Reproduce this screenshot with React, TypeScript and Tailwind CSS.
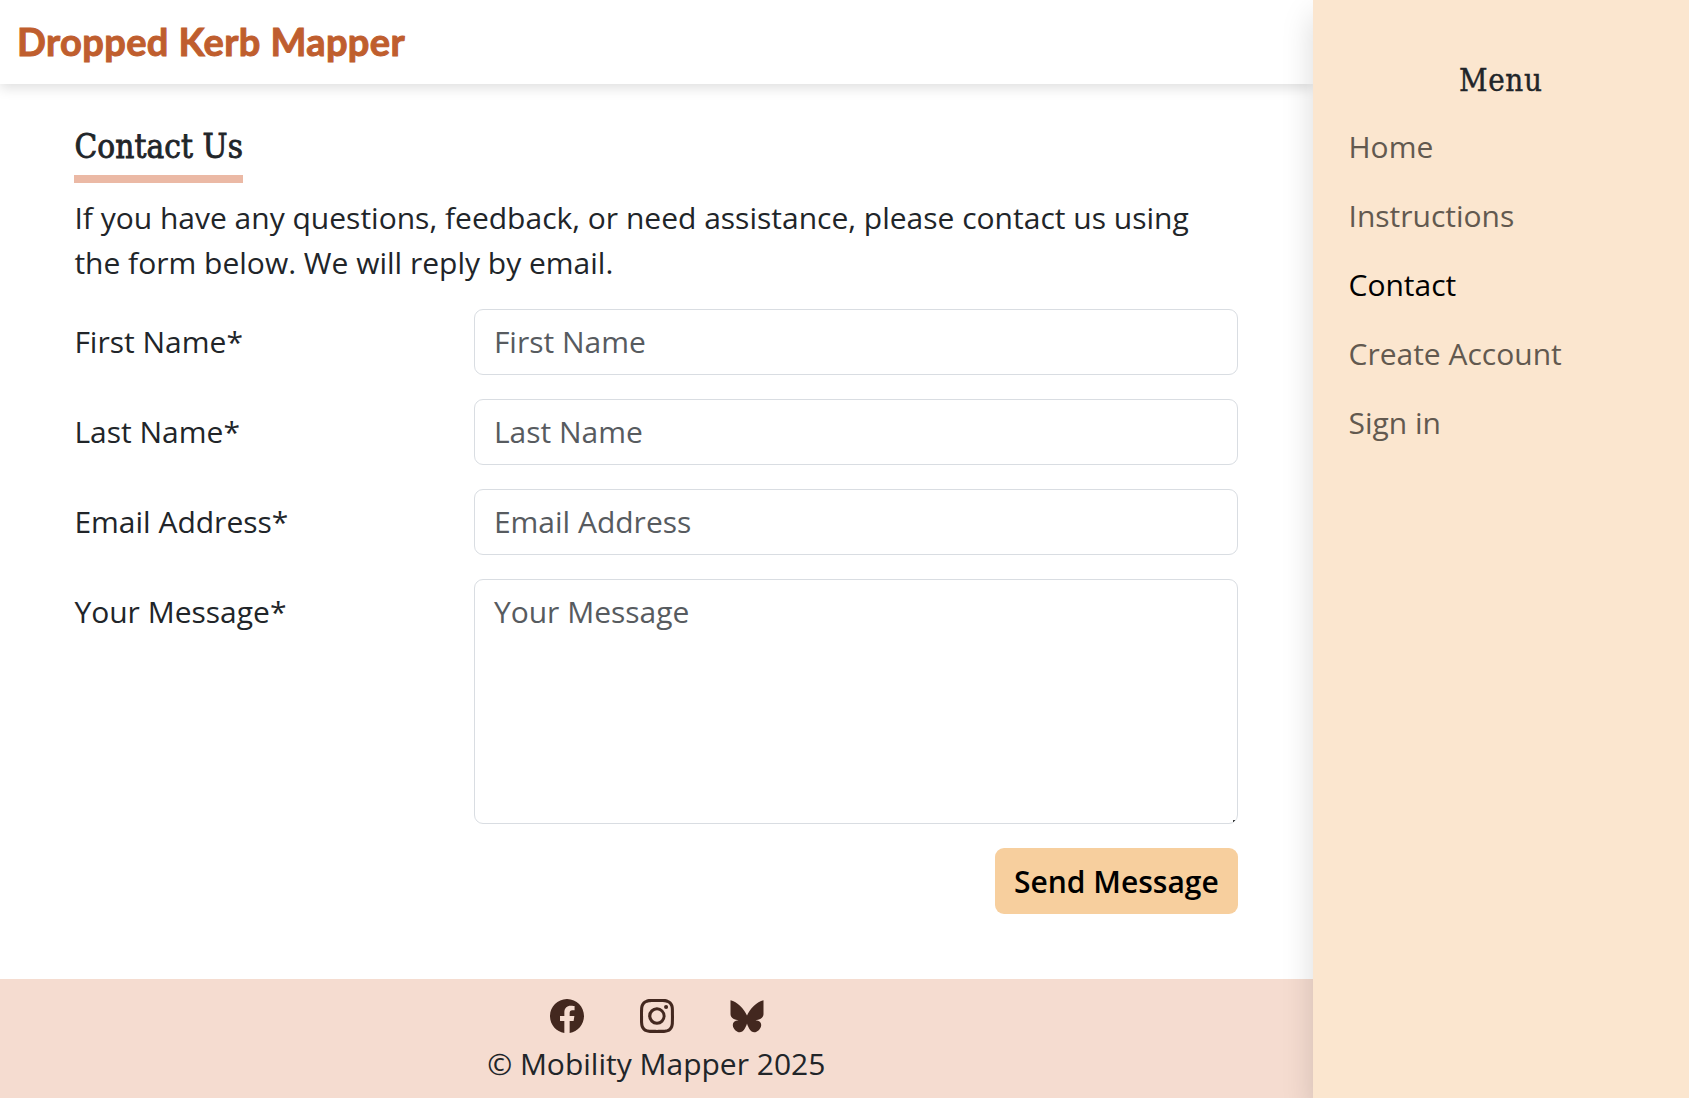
import { BsFacebook, BsInstagram } from "react-icons/bs";

const links = ["Home", "Instructions", "Contact", "Create Account", "Sign in"];
const fields = ["First Name", "Last Name", "Email Address"];
const box =
  "block w-full rounded-[9px] border-[1.5px] border-[#d9dde2] bg-white px-[18.5px] outline-none placeholder:text-[#575b5f] placeholder:opacity-100";

function Butterfly() {
  return (
    <svg viewBox="0 0 34 34" width="34" height="34" fill="currentColor">
      <path d="M.5 1.3C7 2.6 14.5 10.5 17 16.5 19.500 10.5 27 2.600 33.5 1.300V15C33.5 18.500 30 21 25.500 21.300 29.500 21.800 31.200 23.500 31.200 26 31.200 30 27 33.300 24.300 33.300 20.500 33.300 18 28 17 24.500 16 28 13.500 33.300 9.700 33.300 7 33.300 2.800 30 2.800 26 2.800 23.500 4.500 21.800 8.500 21.300 4 21 .5 18.500.5 15Z" />
    </svg>
  );
}

export default function App() {
  return (
    <div className="flex h-[1098px] overflow-hidden bg-white font-['Open_Sans',sans-serif] text-[30px] leading-[45px] text-[#212529]">
      <div className="flex w-[1312.5px] shrink-0 flex-col">
        <header className="flex h-[84px] shrink-0 items-center pb-[2px] pl-[17px] shadow-[0_4px_12px_rgba(0,0,0,0.13)]">
          <a className="whitespace-nowrap font-['Lato',sans-serif] text-[38px] font-bold tracking-[0.4px] text-[#bf5e2e] [-webkit-text-stroke:1px_#bf5e2e]">
            Dropped Kerb Mapper
          </a>
        </header>
        <main className="grow pl-[74.4px] pr-[74.4px] pt-[38px]">
          <h1 className="w-[169px] whitespace-nowrap border-b-[8px] border-[#ebb9a5] pb-[3px] font-['DejaVu_Serif_Condensed','DejaVu_Serif',serif] text-[33px] leading-[50px] tracking-[0.1px] [-webkit-text-stroke:0.8px_#212529]">
            Contact Us
          </h1>
          <p className="mt-[12px] h-[91px]">
            If you have any questions, feedback, or need assistance, please contact us using the form below. We will reply by email.
          </p>
          <form className="mt-[22.5px]">
            {fields.map((f) => (
              <div key={f} className="mb-[24px] flex h-[66px] items-center">
                <label className="w-[400px] shrink-0 pb-[1px]">{f}*</label>
                <input className={box + " h-[66px] pb-[1px]"} placeholder={f} />
              </div>
            ))}
            <div className="relative flex items-start">
              <label className="w-[400px] shrink-0 pt-[10.5px]">Your Message*</label>
              <textarea className={box + " h-[245.5px] resize-none pt-[9.5px]"} placeholder="Your Message" />
              <span className="absolute bottom-[2px] right-[3px] h-[2px] w-[2px] border-l border-t border-[#444]" />
            </div>
            <div className="mt-[24px] flex justify-end">
              <button type="button" className="h-[66px] w-[243.5px] whitespace-nowrap rounded-[9px] bg-[#f7cf9e] font-semibold text-black">
                Send Message
              </button>
            </div>
          </form>
        </main>
        <footer className="flex h-[119.5px] shrink-0 flex-col items-center bg-[#f5dcd0] pt-[20px]">
          <div className="flex gap-[56px] pl-[1px] text-[34px] text-[#43281f]">
            <BsFacebook />
            <BsInstagram />
            <Butterfly />
          </div>
          <p className="mt-[8px]">© Mobility Mapper 2025</p>
        </footer>
      </div>
      <aside className="z-10 grow bg-[#fbe6cf] pt-[58px] shadow-[0_15px_30px_rgba(0,0,0,0.15)]">
        <h2 className="text-center font-['DejaVu_Serif_Condensed','DejaVu_Serif',serif] text-[31px] leading-[45px] tracking-[0.6px] [-webkit-text-stroke:0.4px_#212529]">
          Menu
        </h2>
        <nav className="mt-[9px] flex flex-col pl-[36px]">
          {links.map((l) => (
            <a key={l} className={"py-[12px] " + (l === "Contact" ? "text-black" : "text-[#62594f]")}>
              {l}
            </a>
          ))}
        </nav>
      </aside>
    </div>
  );
}
